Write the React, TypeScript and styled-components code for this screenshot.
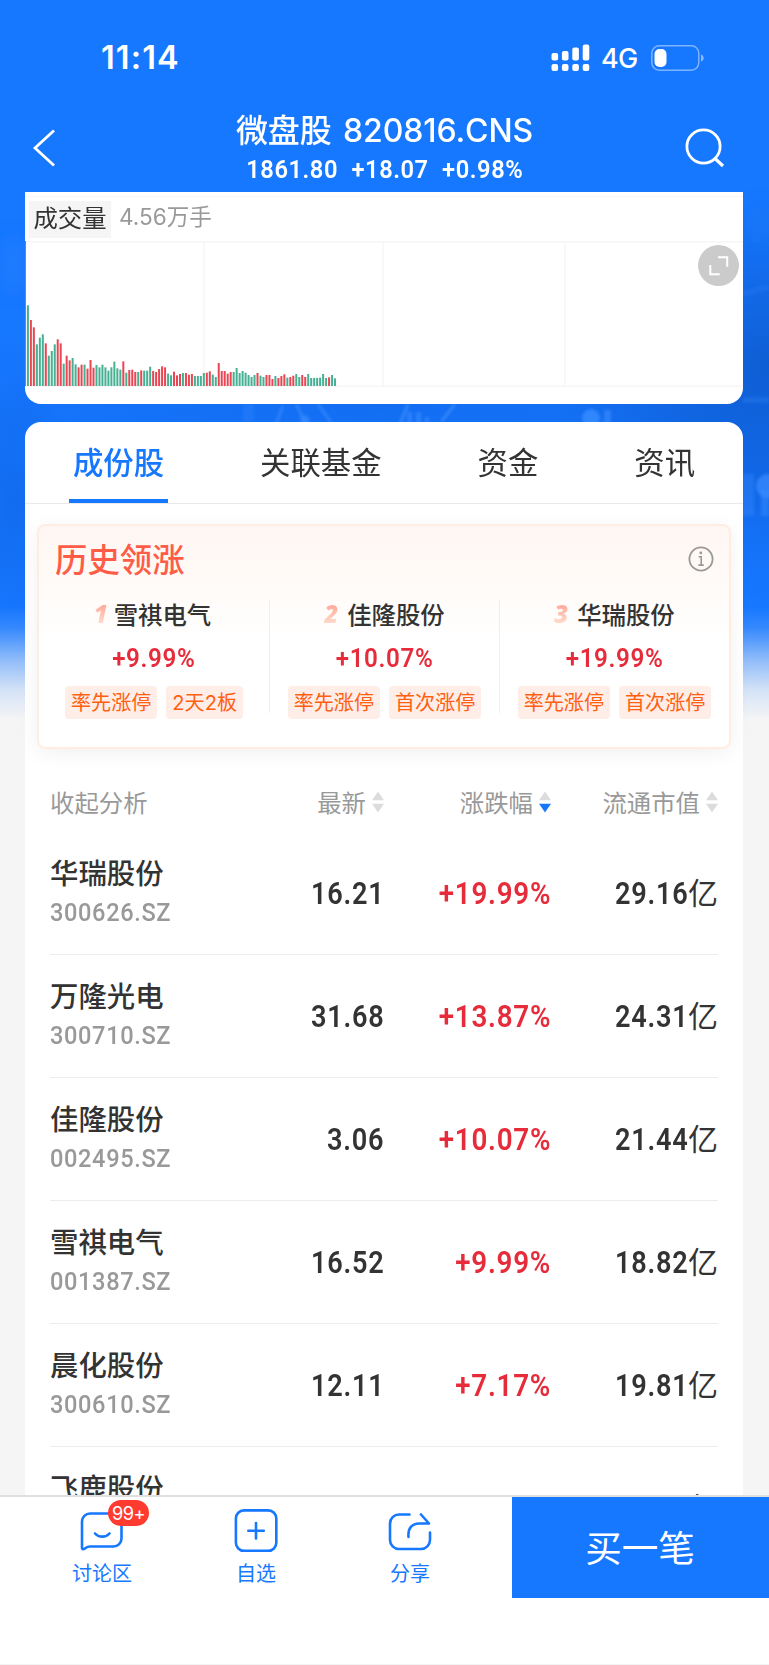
import React from 'react';
import styled, { createGlobalStyle, css } from 'styled-components';

const BLUE = '#1677ff';
const RED = '#e62c3b';
const GREEN = '#2ba583';
const INK = '#333333';
const MUTED = '#999999';

const cjk = `"Noto Sans CJK SC", sans-serif`;
const ui = `Inter, "Noto Sans CJK SC", sans-serif`;
const din = `Roboto, "Noto Sans CJK SC", sans-serif`;

const GlobalStyle = createGlobalStyle`
  *, *::before, *::after { box-sizing: border-box; }
  body { margin: 0; background: #f5f5f5; font-family: ${cjk}; color: ${INK}; }
`;

const Screen = styled.div`
  position: relative;
  width: 769px;
  height: 1665px;
  display: flex;
  flex-direction: column;
  overflow: hidden;
  background: #f5f5f5;
`;

const Backdrop = styled.div`
  position: absolute;
  inset: 0 0 auto 0;
  height: 720px;
  background:
    linear-gradient(180deg, rgba(245, 245, 245, 0) 606px, rgba(245, 245, 245, 0.14) 628px, rgba(245, 245, 245, 0.55) 660px, rgba(245, 245, 245, 0.85) 690px, #f5f5f5 720px),
    radial-gradient(ellipse 230px 170px at 769px 365px, rgba(8, 70, 170, 0.5), rgba(8, 70, 170, 0)),
    radial-gradient(ellipse 200px 110px at 769px 490px, rgba(8, 80, 200, 0.28), rgba(8, 80, 200, 0)),
    radial-gradient(ellipse 60px 130px at 14px 500px, rgba(8, 80, 200, 0.3), rgba(8, 80, 200, 0)),
    radial-gradient(ellipse 500px 90px at 384px 400px, rgba(8, 80, 200, 0.26), rgba(8, 80, 200, 0)),
    ${BLUE};
  svg { display: block; }
`;

const StatusBar = styled.div`
  position: relative;
  height: 100px;
  flex: none;
  display: flex;
  justify-content: space-between;
  align-items: center;
  padding: 15px 64px 0 101px;
  color: #fff;
  font-family: ${ui};
`;

const Clock = styled.span`
  font-size: 32.5px;
  font-weight: 600;
  letter-spacing: 1.1px;
`;

const StatusIcons = styled.div`
  display: flex;
  align-items: center;
`;

const Network = styled.span`
  width: 37px;
  margin: 2px 13px 0 11px;
  font-size: 27px;
  line-height: 30px;
  font-weight: 500;
  letter-spacing: -0.8px;
`;

const NavBar = styled.header`
  position: relative;
  height: 92px;
  flex: none;
  display: grid;
  grid-template-columns: 100px 1fr 100px;
  color: #fff;
`;

const NavIcon = styled.button<{ $end?: boolean }>`
  display: flex;
  align-items: flex-start;
  justify-content: ${p => (p.$end ? 'flex-end' : 'flex-start')};
  padding: ${p => (p.$end ? '27px 44px 0 0' : '29px 0 0 32px')};
  border: 0;
  background: none;
  color: inherit;
`;

const NavTitle = styled.div`
  display: flex;
  flex-direction: column;
  align-items: center;
`;

const FundName = styled.h1`
  margin: 9px 0 0;
  height: 44px;
  line-height: 43px;
  font-family: ${ui};
  font-size: 32px;
  font-weight: 500;
  letter-spacing: -0.1px;
  word-spacing: 3px;
  white-space: nowrap;
`;

const Quote = styled.div`
  display: flex;
  gap: 15px;
  height: 32px;
  line-height: 32px;
  font-family: ${din};
  font-size: 26.5px;
  font-weight: 600;
  letter-spacing: 0.6px;
  white-space: nowrap;
  transform: scaleX(0.895);
`;

const Content = styled.main`
  position: relative;
  flex: 1;
  min-height: 0;
  overflow: hidden;
  padding: 0 26px 0 25px;
`;

const VolumeCard = styled.section`
  position: relative;
  height: 212px;
  background: #fff;
  border-radius: 0 0 16px 16px;
  padding-top: 4px;
`;

const VolumeHead = styled.div`
  display: flex;
  align-items: center;
  height: 45px;
  padding: 0 4px;
  border-top: 1px solid #f6f6f6;
`;

const VolumeLabel = styled.span`
  width: 82px;
  height: 37px;
  line-height: 32px;
  text-align: center;
  font-size: 24.4px;
  background: #f5f5f5;
`;

const VolumeValue = styled.span`
  margin: -7px 0 0 8px;
  font-family: ${ui};
  font-size: 22.6px;
  color: ${MUTED};
`;

const Plot = styled.svg`
  display: block;
  width: 718px;
  height: 146px;
`;

const ExpandButton = styled.button`
  position: absolute;
  top: 53px;
  right: 4px;
  width: 41px;
  height: 41px;
  padding: 0;
  border: 0;
  border-radius: 50%;
  background: #cbcbcb;
  svg { display: block; }
`;

const DetailCard = styled.section`
  margin-top: 18px;
  min-height: 1200px;
  background: #fff;
  border-radius: 16px 16px 0 0;
`;

const Tabs = styled.nav`
  display: flex;
  justify-content: space-around;
  height: 82px;
  border-bottom: 1px solid #eaeaea;
`;

const Tab = styled.a<{ $active?: boolean }>`
  position: relative;
  height: 81px;
  line-height: 78px;
  font-size: 30.4px;
  ${p => p.$active && css`
    color: ${BLUE};
    font-weight: 500;
    &::after {
      content: '';
      position: absolute;
      left: -4px;
      right: -4px;
      bottom: 0;
      height: 4px;
      background: ${BLUE};
    }
  `}
`;

const Leaders = styled.div`
  margin: 20px 12px 0;
  height: 225px;
  border: 2px solid #ffede2;
  border-radius: 8px;
  background: linear-gradient(180deg, #fff6f3 0, #fffaf7 50px, #ffffff 115px);
  box-shadow: 0 4px 20px rgba(0, 0, 0, 0.06);
`;

const LeadersHead = styled.div`
  display: flex;
  justify-content: space-between;
  align-items: center;
  height: 74px;
  padding: 0 15px 9px 16px;
`;

const LeadersTitle = styled.h2`
  margin: -2px 0 0;
  font-size: 32.4px;
  line-height: 44px;
  font-weight: 500;
  color: #ff5c48;
`;

const LeaderGrid = styled.div`
  display: grid;
  grid-template-columns: repeat(3, 1fr);
`;

const Leader = styled.div`
  display: flex;
  flex-direction: column;
  align-items: center;
  height: 113px;
  & + & { border-left: 1px solid #efefef; }
`;

const LeaderName = styled.div`
  display: flex;
  align-items: center;
  height: 28px;
  line-height: 28px;
  font-size: 24.4px;
  font-weight: 500;
`;

const Rank = styled.span<{ $narrow?: boolean }>`
  padding-right: 4px;
  margin-right: ${p => (p.$narrow ? '2px' : '5px')};
  margin-left: ${p => (p.$narrow ? '-3px' : '0')};
  font-family: "Noto Sans", sans-serif;
  font-size: 24px;
  font-weight: 900;
  font-style: italic;
  line-height: 28px;
  color: transparent;
  background: linear-gradient(180deg, #ffab9c 20%, #ffdccb 85%);
  background-clip: text;
  -webkit-background-clip: text;
`;

const LeaderGain = styled.div`
  margin-top: 15px;
  height: 30px;
  line-height: 30px;
  font-family: ${din};
  font-size: 26px;
  font-weight: 600;
  letter-spacing: 0.7px;
  color: ${RED};
  transform: scaleX(0.93);
`;

const Tags = styled.div`
  display: flex;
  gap: 9px;
  margin-top: 13px;
`;

const Tag = styled.span`
  height: 33px;
  line-height: 34px;
  padding: 0 6px;
  border-radius: 4px;
  background: #ffeee8;
  color: #ff6010;
  font-family: ${ui};
  font-size: 20.1px;
  white-space: nowrap;
`;

const rowGrid = css`
  display: grid;
  grid-template-columns: repeat(4, 167px);
  margin: 0 25px;
`;

const TableHead = styled.div`
  ${rowGrid}
  align-items: center;
  height: 83px;
  padding-top: 22px;
  font-size: 24.4px;
  color: ${MUTED};
  font-weight: 400;
`;

const SortHead = styled.button`
  display: flex;
  align-items: center;
  justify-content: flex-end;
  gap: 6px;
  padding: 0;
  border: 0;
  background: none;
  font: inherit;
  color: inherit;
  white-space: nowrap;
`;

const Row = styled.div`
  ${rowGrid}
  align-items: center;
  height: 123px;
  border-bottom: 1px solid #ececec;
`;

const Stock = styled.div`
  display: flex;
  flex-direction: column;
  align-items: flex-start;
  height: 80px;
  white-space: nowrap;
`;

const StockName = styled.span`
  height: 40px;
  font-size: 28.4px;
  line-height: 38px;
  font-weight: 500;
`;

const StockCode = styled.span`
  font-family: ${din};
  font-size: 26.3px;
  line-height: 38px;
  letter-spacing: 0.7px;
  color: ${MUTED};
  font-weight: 500;
  transform: scaleX(0.897);
  transform-origin: left center;
`;

const Figure = styled.div`
  display: flex;
  justify-content: flex-end;
  padding-top: 2px;
  height: 42px;
  font-size: 30.5px;
  line-height: 40px;
  white-space: nowrap;
`;

const CapFigure = styled(Figure)`
  grid-column: 4;
`;

const Digits = styled.span<{ $gain?: boolean }>`
  font-family: ${din};
  font-weight: 600;
  letter-spacing: 0.8px;
  color: ${p => (p.$gain ? RED : INK)};
  transform: scaleX(${p => (p.$gain ? 0.912 : 0.89)});
  transform-origin: right center;
`;

const Unit = styled.span`
  font-family: ${cjk};
  font-size: 30px;
  font-weight: 400;
  line-height: 35px;
`;

const BottomBar = styled.footer`
  position: relative;
  flex: none;
  display: flex;
  align-items: flex-start;
  height: 170px;
  border-top: 2px solid #e0e0e0;
  border-bottom: 1px solid #f3f3f3;
  background: #fff;
`;

const Actions = styled.div`
  display: grid;
  grid-template-columns: repeat(3, 154px);
  width: 512px;
  padding: 0 25px;
`;

const Action = styled.button`
  position: relative;
  display: flex;
  flex-direction: column;
  align-items: center;
  padding: 12px 0 0;
  border: 0;
  background: none;
  color: ${BLUE};
  font-family: ${cjk};
  font-size: 20px;
  line-height: 28px;
  svg { display: block; margin-bottom: 6px; }
`;

const Badge = styled.span`
  position: absolute;
  left: 83px;
  top: 3px;
  width: 41px;
  height: 26px;
  line-height: 26px;
  border-radius: 13px;
  background: #ff3b30;
  color: #fff;
  font-family: ${ui};
  font-size: 18.2px;
  letter-spacing: -0.5px;
`;

const BuyButton = styled.button`
  display: flex;
  justify-content: center;
  width: 257px;
  height: 101px;
  padding: 0 1px 0 0;
  border: 0;
  background: ${BLUE};
  color: #fff;
  font-family: ${cjk};
  font-size: 36.6px;
  line-height: 99px;
`;

// Volume per interval in thirds of a pixel, prefixed R for a rise and G for a fall.
const volumes =
  'R435 G242 R198 R176 G125 G145 G155 R128 G91 G105 G125 R140 R128 G67 R91 R77 G84 G65 R56 R64 G64 R52 R78 R55 G63 G56 G64 G56 G46 G56 G73 G53 G49 R74 G40 R48 R49 R42 G42 R47 G46 G46 G58 R45 R42 R51 R59 R56 G37 G32 R43 R32 R36 G39 R39 R34 R36 G30 G30 G30 G39 R40 R44 G34 G27 R69 R45 R45 R37 R42 G42 G54 G39 G45 G40 G33 G27 G33 R39 G31 G27 R33 R33 R21 G30 R24 R30 R35 G25 R27 R31 G36 G27 R33 R27 G36 G24 G24 G24 G25 G36 G24 R26 G33 G23'
    .split(' ')
    .map(v => ({ up: v[0] === 'R', h: Number(v.slice(1)) / 3 }));

const leaders = [
  { name: '雪祺电气', gain: '+9.99%', tags: ['率先涨停', '2天2板'] },
  { name: '佳隆股份', gain: '+10.07%', tags: ['率先涨停', '首次涨停'] },
  { name: '华瑞股份', gain: '+19.99%', tags: ['率先涨停', '首次涨停'] },
];

const stocks = [
  ['华瑞股份', '300626.SZ', '16.21', '+19.99%', '29.16'],
  ['万隆光电', '300710.SZ', '31.68', '+13.87%', '24.31'],
  ['佳隆股份', '002495.SZ', '3.06', '+10.07%', '21.44'],
  ['雪祺电气', '001387.SZ', '16.52', '+9.99%', '18.82'],
  ['晨化股份', '300610.SZ', '12.11', '+7.17%', '19.81'],
];

function SortArrows({ desc }: { desc?: boolean }) {
  return (
    <svg width="12" height="22" viewBox="0 0 12 22">
      <path d="M6 .5 12 9.3H0z" fill="#dcdcdc" />
      <path d="M6 21.5 0 12.7h12z" fill={desc ? BLUE : '#dcdcdc'} />
    </svg>
  );
}

function Signal() {
  const tops = [9, 7, 3.5, 0.5];
  return (
    <svg width="39" height="28" viewBox="0 0 39 28" fill="#fff">
      {tops.map((t, i) => (
        <React.Fragment key={t}>
          <rect x={0.5 + i * 10.4} y={t} width="6.6" height={16.6 - t} rx="2" />
          <rect x={0.5 + i * 10.4} y="20" width="6.6" height="7" rx="2" />
        </React.Fragment>
      ))}
    </svg>
  );
}

function Battery() {
  return (
    <svg width="54" height="26" viewBox="0 0 54 26">
      <rect x=".8" y=".8" width="47" height="24.4" rx="7.5" fill="none" stroke="#fff" strokeOpacity=".45" strokeWidth="1.5" />
      <rect x="3.5" y="4" width="12" height="18" rx="5" fill="#fff" />
      <path d="M50 9.5c3.6 1 3.6 6 0 7z" fill="#fff" fillOpacity=".5" />
    </svg>
  );
}

function Texture() {
  return (
    <svg width="769" height="720" viewBox="0 0 769 720">
      <defs>
        <filter id="soft" x="-50%" y="-50%" width="200%" height="200%"><feGaussianBlur stdDeviation="1.6" /></filter>
        <filter id="softer" x="-100%" y="-100%" width="300%" height="300%"><feGaussianBlur stdDeviation="9" /></filter>
      </defs>
      <g filter="url(#softer)" fill="#2f86ff">
        <ellipse cx="14" cy="265" rx="8" ry="28" opacity=".5" />
        <ellipse cx="758" cy="225" rx="12" ry="20" opacity=".2" />
      </g>
      <g filter="url(#soft)" fill="#3a8cff" stroke="none">
        <rect x="243" y="404" width="11" height="18" opacity=".25" />
        <path d="M276 424l7-18M296 404l10 20M318 404l14 20" stroke="#4a96ff" strokeWidth="3" opacity=".5" />
        <circle cx="305" cy="420" r="5" opacity=".6" />
        <path d="M400 424l8-20M441 422l14-18" stroke="#4a96ff" strokeWidth="2.5" opacity=".7" />
        <path d="M407 412h5v12h-5zM416 412h5v12h-5zM425 417h4v7h-4z" opacity=".6" />
        <circle cx="591" cy="418" r="9" opacity=".8" />
        <rect x="604" y="410" width="7" height="14" opacity=".6" />
        <circle cx="768" cy="486" r="12" opacity=".7" />
        <rect x="742" y="474" width="12" height="42" opacity=".35" />
        <rect x="761" y="490" width="8" height="26" opacity=".5" />
        <path d="M743 294l26-7" stroke="#3a8cff" strokeWidth="5" opacity=".2" />
        <path d="M743 400h26" stroke="#3a8cff" strokeWidth="6" opacity=".25" />
      </g>
    </svg>
  );
}

export default function App() {
  return (
    <>
      <GlobalStyle />
      <Screen>
        <Backdrop><Texture /></Backdrop>
        <StatusBar>
          <Clock>11:14</Clock>
          <StatusIcons>
            <Signal />
            <Network>4G</Network>
            <Battery />
          </StatusIcons>
        </StatusBar>
        <NavBar>
          <NavIcon aria-label="返回">
            <svg width="24" height="38" viewBox="0 0 24 38" fill="none" stroke="#fff" strokeWidth="2.8">
              <path d="M22 1.5 3 19l19 17.5" />
            </svg>
          </NavIcon>
          <NavTitle>
            <FundName>微盘股 820816.CNS</FundName>
            <Quote><span>1861.80</span><span>+18.07</span><span>+0.98%</span></Quote>
          </NavTitle>
          <NavIcon $end aria-label="搜索">
            <svg width="41" height="41" viewBox="0 0 41 41" fill="none" stroke="#fff" strokeWidth="2.8">
              <circle cx="19.5" cy="19.5" r="16.6" />
              <path d="m31 31.5 8 7.5" strokeWidth="3.2" />
            </svg>
          </NavIcon>
        </NavBar>
        <Content>
          <VolumeCard>
            <VolumeHead>
              <VolumeLabel>成交量</VolumeLabel>
              <VolumeValue>4.56万手</VolumeValue>
            </VolumeHead>
            <Plot viewBox="0 0 718 146">
              <g stroke="#f6f6f6" strokeWidth="1.4">
                <path d="M0 .7h718M0 145.3h718M179 0v145M358 0v145M540 0v145" />
              </g>
              {volumes.map((v, i) => (
                <rect
                  key={i}
                  x={i === 0 ? 0 : 1.9 + (i - 1) * 2.982}
                  y={145 - v.h}
                  width={i === 0 ? 0.9 : 2}
                  height={v.h}
                  fill={v.up ? RED : GREEN}
                  fillOpacity=".88"
                />
              ))}
            </Plot>
            <ExpandButton aria-label="放大">
              <svg width="41" height="41" viewBox="0 0 41 41" fill="none" stroke="#fff" strokeWidth="2">
                <path d="M20 12.3h9.2v9.4M12.3 20v9.2h9.4" />
              </svg>
            </ExpandButton>
          </VolumeCard>
          <DetailCard>
            <Tabs>
              <Tab $active>成份股</Tab>
              <Tab>关联基金</Tab>
              <Tab>资金</Tab>
              <Tab>资讯</Tab>
            </Tabs>
            <Leaders>
              <LeadersHead>
                <LeadersTitle>历史领涨</LeadersTitle>
                <svg width="26" height="26" viewBox="0 0 26 26" fill="none" stroke="#999" strokeWidth="1.8">
                  <circle cx="13" cy="13" r="11.6" />
                  <path d="M10.6 10.7h2.6v8.2M10.4 19.1h5.4" strokeWidth="1.6" />
                  <circle cx="12.8" cy="6.9" r="1.4" fill="#999" stroke="none" />
                </svg>
              </LeadersHead>
              <LeaderGrid>
                {leaders.map((l, i) => (
                  <Leader key={l.name}>
                    <LeaderName><Rank $narrow={i === 0}>{i + 1}</Rank>{l.name}</LeaderName>
                    <LeaderGain>{l.gain}</LeaderGain>
                    <Tags>{l.tags.map(t => <Tag key={t}>{t}</Tag>)}</Tags>
                  </Leader>
                ))}
              </LeaderGrid>
            </Leaders>
            <TableHead>
              <span>收起分析</span>
              <SortHead>最新<SortArrows /></SortHead>
              <SortHead>涨跌幅<SortArrows desc /></SortHead>
              <SortHead>流通市值<SortArrows /></SortHead>
            </TableHead>
            {stocks.map(([name, code, last, gain, cap]) => (
              <Row key={code}>
                <Stock>
                  <StockName>{name}</StockName>
                  <StockCode>{code}</StockCode>
                </Stock>
                <Figure><Digits>{last}</Digits></Figure>
                <Figure><Digits $gain>{gain}</Digits></Figure>
                <CapFigure><Digits>{cap}</Digits><Unit>亿</Unit></CapFigure>
              </Row>
            ))}
            <Row>
              <Stock>
                <StockName>飞鹿股份</StockName>
              </Stock>
              <CapFigure><Unit>亿</Unit></CapFigure>
            </Row>
          </DetailCard>
        </Content>
        <BottomBar>
          <Actions>
            <Action>
              <svg width="44" height="44" viewBox="0 0 44 44" fill="none" stroke={BLUE} strokeWidth="2.6" strokeLinecap="round" strokeLinejoin="round">
                <path d="M10.5 4.5h23a8 8 0 0 1 8 8v17a8 8 0 0 1-8 8H9.5c-2.2 0-3.4.8-5 2.3-1.1.9-2.5.4-2.5-.9V12.5a8 8 0 0 1 8-8z" />
                <path d="M15 24.5c3.6 4.2 11 4.2 14.5 0" />
              </svg>
              讨论区
              <Badge>99+</Badge>
            </Action>
            <Action>
              <svg width="44" height="44" viewBox="0 0 44 44" fill="none" stroke={BLUE} strokeWidth="2.6" strokeLinecap="round">
                <rect x="1.9" y="1.4" width="40.4" height="40.4" rx="8" />
                <path d="M22 14v15.5M14.3 21.8h15.5" />
              </svg>
              自选
            </Action>
            <Action>
              <svg width="44" height="44" viewBox="0 0 44 44" fill="none" stroke={BLUE} strokeWidth="2.6" strokeLinecap="round" strokeLinejoin="round">
                <path d="M21.5 5.5H11a9 9 0 0 0-9 9V31a9 9 0 0 0 9 9h22a9 9 0 0 0 9-9v-7.5" />
                <path d="M20.5 28c-.8-9 3.5-13.5 11-13.5H41l-8-9" />
              </svg>
              分享
            </Action>
          </Actions>
          <BuyButton>买一笔</BuyButton>
        </BottomBar>
      </Screen>
    </>
  );
}
